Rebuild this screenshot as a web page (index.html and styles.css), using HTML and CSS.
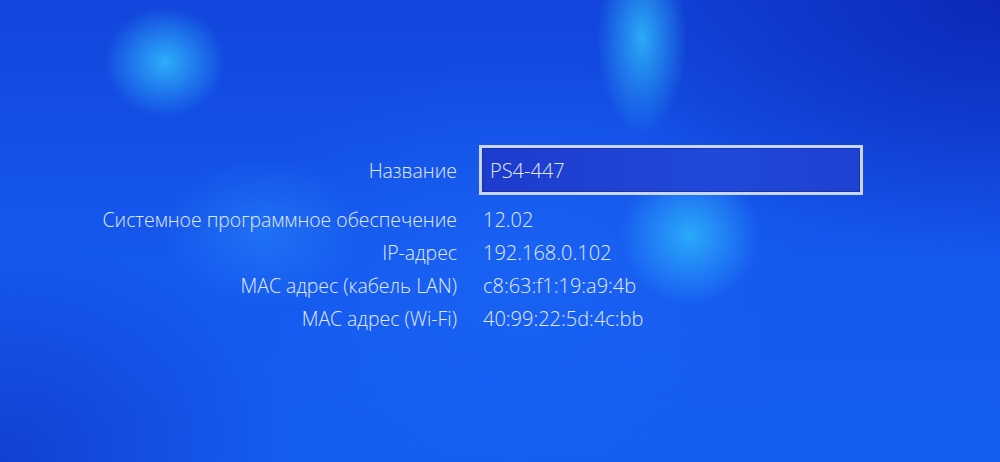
FILE: index.html
```html
<!DOCTYPE html>
<html lang="ru">
<head>
<meta charset="utf-8">
<title>Информация о системе</title>
<link rel="stylesheet" href="styles.css">
</head>
<body>
<main class="screen">
  <section class="info">
    <div class="label label-name">Название</div>
    <div class="name-field"><span class="name-text">PS4-447</span></div>

    <div class="label">Системное программное обеспечение</div>
    <div class="value">12.02</div>

    <div class="label">IP-адрес</div>
    <div class="value">192.168.0.102</div>

    <div class="label">MAC адрес (кабель LAN)</div>
    <div class="value">c8:63:f1:19:a9:4b</div>

    <div class="label">MAC адрес (Wi-Fi)</div>
    <div class="value">40:99:22:5d:4c:bb</div>
  </section>
</main>
</body>
</html>
```

FILE: styles.css
```css
html, body {
  margin: 0;
  padding: 0;
  height: 100%;
}

body {
  font-family: "Open Sans", "Noto Sans", sans-serif;
  color: #e2eaff;
  overflow: hidden;
}

.screen {
  width: 1000px;
  height: 462px;
  box-sizing: border-box;
  padding-top: 145px;
  background:
    radial-gradient(ellipse 60px 55px at 165px 62px, rgba(50, 190, 255, 0.85), rgba(40, 170, 255, 0) 100%),
    radial-gradient(ellipse 45px 95px at 642px 38px, rgba(50, 195, 255, 0.8), rgba(40, 170, 255, 0) 100%),
    radial-gradient(ellipse 70px 70px at 690px 235px, rgba(50, 195, 255, 0.75), rgba(40, 170, 255, 0) 100%),
    radial-gradient(ellipse 100px 75px at 262px 232px, rgba(50, 150, 255, 0.4), rgba(50, 150, 255, 0) 100%),
    radial-gradient(ellipse 280px 200px at 520px 260px, rgba(30, 110, 250, 0.45), rgba(30, 110, 250, 0) 100%),
    radial-gradient(ellipse 420px 260px at 1000px 0px, rgba(10, 30, 170, 0.75), rgba(10, 30, 170, 0) 100%),
    radial-gradient(ellipse 300px 220px at 0px 462px, rgba(12, 40, 180, 0.55), rgba(12, 40, 180, 0) 100%),
    linear-gradient(180deg, #1246dc 0%, #1558ee 55%, #165ef2 100%);
}

.info {
  display: grid;
  grid-template-columns: 457px 384px;
  grid-template-rows: 58px repeat(4, 33px);
  column-gap: 22px;
  align-items: center;
}

.label,
.value,
.name-text {
  font-size: 20px;
  font-weight: 300;
  white-space: nowrap;
}

.label {
  text-align: right;
  font-size: 19.4px;
}

.label-name {
  align-self: start;
  line-height: 52px;
}

.value {
  padding-left: 4px;
}

.name-field {
  align-self: start;
  height: 50px;
  box-sizing: border-box;
  border: 3px solid #c9d5f2;
  background: linear-gradient(90deg, #1d3bcc 0%, #2148d8 60%, #1e42d2 100%);
  box-shadow: inset 0 0 0 1px rgba(20, 40, 160, 0.6);
  display: flex;
  align-items: center;
  padding-left: 8px;
}
```
